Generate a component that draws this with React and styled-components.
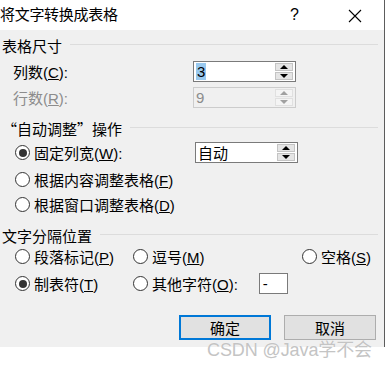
import React from 'react';
import styled, { createGlobalStyle } from 'styled-components';

const GlobalStyle = createGlobalStyle`
  html, body {
    margin: 0;
    padding: 0;
    background: #ffffff;
  }
  body {
    font-family: "Liberation Sans", "Noto Sans CJK SC", sans-serif;
    font-size: 15px;
    color: #000;
  }
`;

const Page = styled.div`
  position: relative;
  width: 386px;
  height: 367px;
  overflow: hidden;
`;

const Window = styled.div`
  width: 384px;
  border-right: 1px solid #5c5c5c;
  display: flex;
  flex-direction: column;
`;

const TitleBar = styled.div`
  height: 30px;
  background: #ffffff;
  display: flex;
  align-items: center;
  padding-bottom: 4px;
  box-sizing: border-box;
  font-size: 15px;

  .title {
    flex: 1;
    letter-spacing: -0.3px;
  }
  .help {
    width: 12px;
    margin-right: 46px;
    font-size: 16px;
    margin-top: 4px;
  }
  .close {
    width: 14px;
    height: 14px;
    margin-right: 22px;
    margin-top: 6px;
  }
`;

const Body = styled.div`
  background: #f0f0f0;
  height: 317px;
  padding: 5px 6px 0 0;
  box-sizing: border-box;
  display: flex;
  flex-direction: column;
`;

const Section = styled.div`
  display: flex;
  align-items: center;
  height: 20px;
  margin-top: ${(p) => p.$top || 0}px;
  padding-left: 2px;

  .cjk {
    font-family: "Noto Sans CJK SC", sans-serif;
  }

  &::after {
    content: '';
    flex: 1;
    border-top: 1px solid #dcdcdc;
    margin-left: 8px;
    margin-top: -1px;
  }
`;

const FieldRow = styled.div`
  display: grid;
  grid-template-columns: 180px 103px;
  align-items: center;
  height: ${(p) => p.$h || 21}px;
  margin-top: ${(p) => p.$top || 0}px;
  padding-left: ${(p) => p.$left || 13}px;
  color: ${(p) => (p.$disabled ? '#8c8c8c' : '#000')};
`;

const RadioGrid = styled.div`
  display: grid;
  grid-template-columns: 118px 169px auto;
  align-items: center;
  height: ${(p) => p.$h || 20}px;
  margin-top: ${(p) => p.$top || 0}px;
  padding-left: 15px;
`;

const RadioLabel = styled.label`
  display: flex;
  align-items: center;
  gap: 4px;
  white-space: nowrap;

  .dot {
    flex-shrink: 0;
    width: 15px;
    height: 15px;
    border: 1px solid #333;
    border-radius: 50%;
    background: #fff;
    display: flex;
    align-items: center;
    justify-content: center;
    box-sizing: border-box;
  }
  .dot::after {
    content: '';
    width: 8px;
    height: 8px;
    border-radius: 50%;
    background: ${(p) => (p.$checked ? '#333' : 'transparent')};
  }
`;

const Spin = styled.div`
  height: 21px;
  width: 103px;
  box-sizing: border-box;
  border: 1px solid ${(p) => (p.$disabled ? '#cccccc' : '#7a7a7a')};
  background: ${(p) => (p.$disabled ? '#f0f0f0' : '#ffffff')};
  display: flex;
  align-items: stretch;
  color: ${(p) => (p.$disabled ? '#8c8c8c' : '#000')};

  .value {
    flex: 1;
    display: flex;
    align-items: center;
    padding-left: 2px;
    font-size: 15px;
  }
  .sel {
    background: #99c9ef;
    padding: 0 1px;
    line-height: 17px;
  }
  .arrows {
    width: 18px;
    margin: 1px 2px 1px 0;
    display: flex;
    flex-direction: column;
    gap: 1px;
  }
`;

const ArrowBtn = styled.div`
  flex: 1;
  background: ${(p) => (p.$disabled ? '#f4f4f4' : '#e5e5e5')};
  border: 1px solid ${(p) => (p.$disabled ? '#e0e0e0' : '#c4c4c4')};
  display: flex;
  align-items: center;
  justify-content: center;

  &::after {
    content: '';
    border-left: 4px solid transparent;
    border-right: 4px solid transparent;
    ${(p) => (p.$down ? 'border-top' : 'border-bottom')}: 4px solid ${(p) =>
      p.$disabled ? '#a0a0a0' : '#000'};
  }
`;

const CharBox = styled.div`
  width: 29px;
  height: 21px;
  box-sizing: border-box;
  border: 1px solid #7a7a7a;
  background: #fff;
  margin-left: 17px;
  display: flex;
  align-items: center;
  padding-left: 3px;
`;

const Buttons = styled.div`
  display: flex;
  justify-content: flex-end;
  gap: 13px;
  margin-top: 21px;
  padding-right: 2px;
`;

const Button = styled.button`
  width: 92px;
  height: 25px;
  box-sizing: border-box;
  background: #e1e1e1;
  border: ${(p) => (p.$primary ? '2px solid #0078d7' : '1px solid #adadad')};
  font-family: "Noto Sans CJK SC", sans-serif;
  font-size: 15px;
  padding: 0;
  color: #000;
`;

const Watermark = styled.div`
  position: absolute;
  left: 207px;
  top: 335px;
  font-family: "Liberation Sans", "Noto Sans CJK SC", sans-serif;
  font-size: 18px;
  color: #c4c4c4;
  letter-spacing: -0.1px;
  text-shadow: 0 0 1px #fff;
`;

const Radio = ({ checked, children }) => (
  <RadioLabel $checked={checked}>
    <span className="dot" />
    <span>{children}</span>
  </RadioLabel>
);

const SpinBox = ({ disabled, children }) => (
  <Spin $disabled={disabled}>
    <div className="value">{children}</div>
    <div className="arrows">
      <ArrowBtn $disabled={disabled} />
      <ArrowBtn $disabled={disabled} $down />
    </div>
  </Spin>
);

const App = () => {
  return (
    <Page>
      <GlobalStyle />
      <Window>
        <TitleBar>
          <span className="title">将文字转换成表格</span>
          <span className="help">?</span>
          <svg className="close" viewBox="0 0 14 14">
            <path d="M1 1 L13 13 M13 1 L1 13" stroke="#000" strokeWidth="1.1" fill="none" />
          </svg>
        </TitleBar>
        <Body>
          <Section>表格尺寸</Section>
          <FieldRow $top={5} $h={22}>
            <span>列数(<u>C</u>):</span>
            <SpinBox>
              <span className="sel">3</span>
            </SpinBox>
          </FieldRow>
          <FieldRow $top={5} $disabled>
            <span>行数(<u>R</u>):</span>
            <SpinBox disabled>9</SpinBox>
          </FieldRow>

          <Section $top={10}>
            <span className="cjk">“自动调整”操作</span>
          </Section>
          <FieldRow $top={4} $left={15}>
            <Radio checked>固定列宽(<u>W</u>):</Radio>
            <SpinBox>自动</SpinBox>
          </FieldRow>
          <RadioGrid $top={6}>
            <Radio>根据内容调整表格(<u>F</u>)</Radio>
          </RadioGrid>
          <RadioGrid $top={5}>
            <Radio>根据窗口调整表格(<u>D</u>)</Radio>
          </RadioGrid>

          <Section $top={11}>文字分隔位置</Section>
          <RadioGrid $top={1}>
            <Radio>段落标记(<u>P</u>)</Radio>
            <Radio>逗号(<u>M</u>)</Radio>
            <Radio>空格(<u>S</u>)</Radio>
          </RadioGrid>
          <RadioGrid $top={7} $h={21}>
            <Radio checked>制表符(<u>T</u>)</Radio>
            <RadioLabel>
              <span className="dot" />
              <span>其他字符(<u>O</u>):</span>
              <CharBox>-</CharBox>
            </RadioLabel>
          </RadioGrid>

          <Buttons>
            <Button $primary>确定</Button>
            <Button>取消</Button>
          </Buttons>
        </Body>
      </Window>
      <Watermark>CSDN @Java学不会</Watermark>
    </Page>
  );
};

export default App;
